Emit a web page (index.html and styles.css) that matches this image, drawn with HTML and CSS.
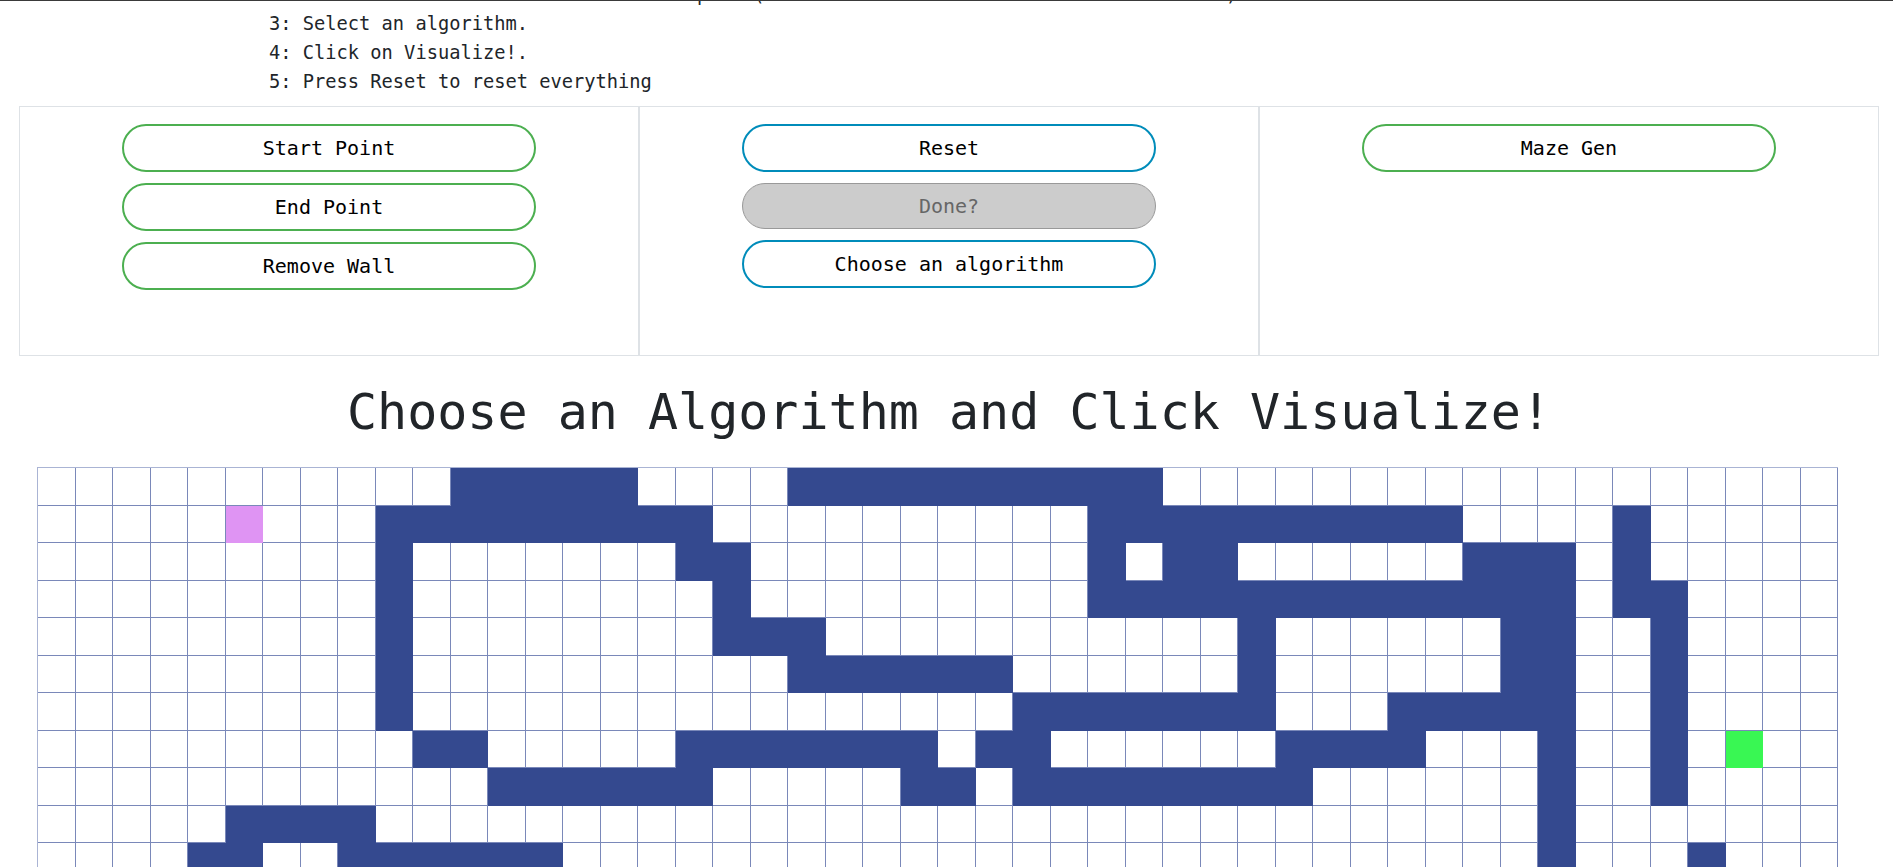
FILE: index.html
```html
<!DOCTYPE html>
<html lang="en">
<head>
<meta charset="utf-8">
<title>Pathfinding Visualizer</title>
<link rel="stylesheet" href="styles.css">
</head>
<body>
<div class="topline"></div>
<ul class="instructions">
  <li>2: You can draw walls to obstruct the path (Use Remove Walls to remove unwanted walls)</li>
  <li>3: Select an algorithm.</li>
  <li>4: Click on Visualize!.</li>
  <li>5: Press Reset to reset everything</li>
</ul>
<div class="panel">
  <div class="panel-col">
    <button class="btn btn-green">Start Point</button>
    <button class="btn btn-green">End Point</button>
    <button class="btn btn-green">Remove Wall</button>
  </div>
  <div class="panel-col">
    <button class="btn btn-blue">Reset</button>
    <button class="btn btn-disabled" disabled>Done?</button>
    <button class="btn btn-blue">Choose an algorithm</button>
  </div>
  <div class="panel-col">
    <button class="btn btn-green">Maze Gen</button>
  </div>
</div>
<h1 class="title">Choose an Algorithm and Click Visualize!</h1>
<div class="grid" id="grid"></div>
<script src="script.js"></script>
</body>
</html>
```

FILE: styles.css
```css
* { box-sizing: border-box; }
html, body { margin: 0; padding: 0; overflow: hidden; background: #fff; }
body { font-family: "DejaVu Sans Mono", "Liberation Mono", monospace; color: #212529; }
.topline { height: 1px; background: #3a3a3a; position: relative; z-index: 2; }
.instructions { margin: -21px 0 0; padding: 0 0 0 269px; list-style: none; font-size: 18.72px; line-height: 29px; }
.panel { display: flex; margin: 10px 14px 0 19px; }
.panel-col { flex: 0 0 620px; height: 250px; border: 1px solid #dee2e6; display: flex; flex-direction: column; align-items: center; gap: 11px; padding-top: 17px; }
.btn { width: 414px; height: 48px; border: 2px solid #4caf50; border-radius: 24px; background: #fff; font-family: "DejaVu Sans Mono", "Liberation Mono", monospace; font-size: 20px; color: #000; padding: 0; }
.btn-green { border-color: #4caf50; }
.btn-blue { border-color: #008cba; }
.btn-disabled { background: #ccc; border: 1px solid #999; color: #666; height: 46px; }
.title { margin: 27px 14px 26px 19px; font-size: 50px; line-height: 58px; font-weight: normal; text-align: center; color: #212529; }
.grid { display: grid; grid-template-columns: repeat(48, 37.5px); grid-auto-rows: 37.5px; margin-left: 37px; width: 1801px; border-top: 1px solid #aab4d4; border-left: 1px solid #aab4d4; }
.node { border-right: 1px solid #7a88b9; border-bottom: 1px solid #7a88b9; background: #fff; }
.node.wall { background: #34498f; border-color: #34498f; }
.node.start { background: #df94f3; border-color: #df94f3; }
.node.end { background: #39f753; border-color: #39f753; }
```

FILE: script.js
```js
var walls = {
  0: [[11,15],[20,29]],
  1: [[9,17],[28,37],[42,42]],
  2: [[9,9],[17,18],[28,28],[30,31],[38,40],[42,42]],
  3: [[9,9],[18,18],[28,40],[42,43]],
  4: [[9,9],[18,20],[32,32],[39,40],[43,43]],
  5: [[9,9],[20,25],[32,32],[39,40],[43,43]],
  6: [[9,9],[26,32],[36,40],[43,43]],
  7: [[10,11],[17,23],[25,26],[33,36],[40,40],[43,43]],
  8: [[12,17],[23,24],[26,33],[40,40],[43,43]],
  9: [[5,8],[40,40]],
  10: [[4,5],[8,13],[40,40],[44,44]],
  11: [[40,40],[44,44]]
};
var ROWS = 12, COLS = 48;
var grid = document.getElementById('grid');
for (var r = 0; r < ROWS; r++) {
  for (var c = 0; c < COLS; c++) {
    var d = document.createElement('div');
    var cls = 'node';
    var list = walls[r] || [];
    for (var i = 0; i < list.length; i++) {
      if (c >= list[i][0] && c <= list[i][1]) { cls += ' wall'; }
    }
    if (r === 1 && c === 5) cls += ' start';
    if (r === 7 && c === 45) cls += ' end';
    d.className = cls;
    grid.appendChild(d);
  }
}
```
